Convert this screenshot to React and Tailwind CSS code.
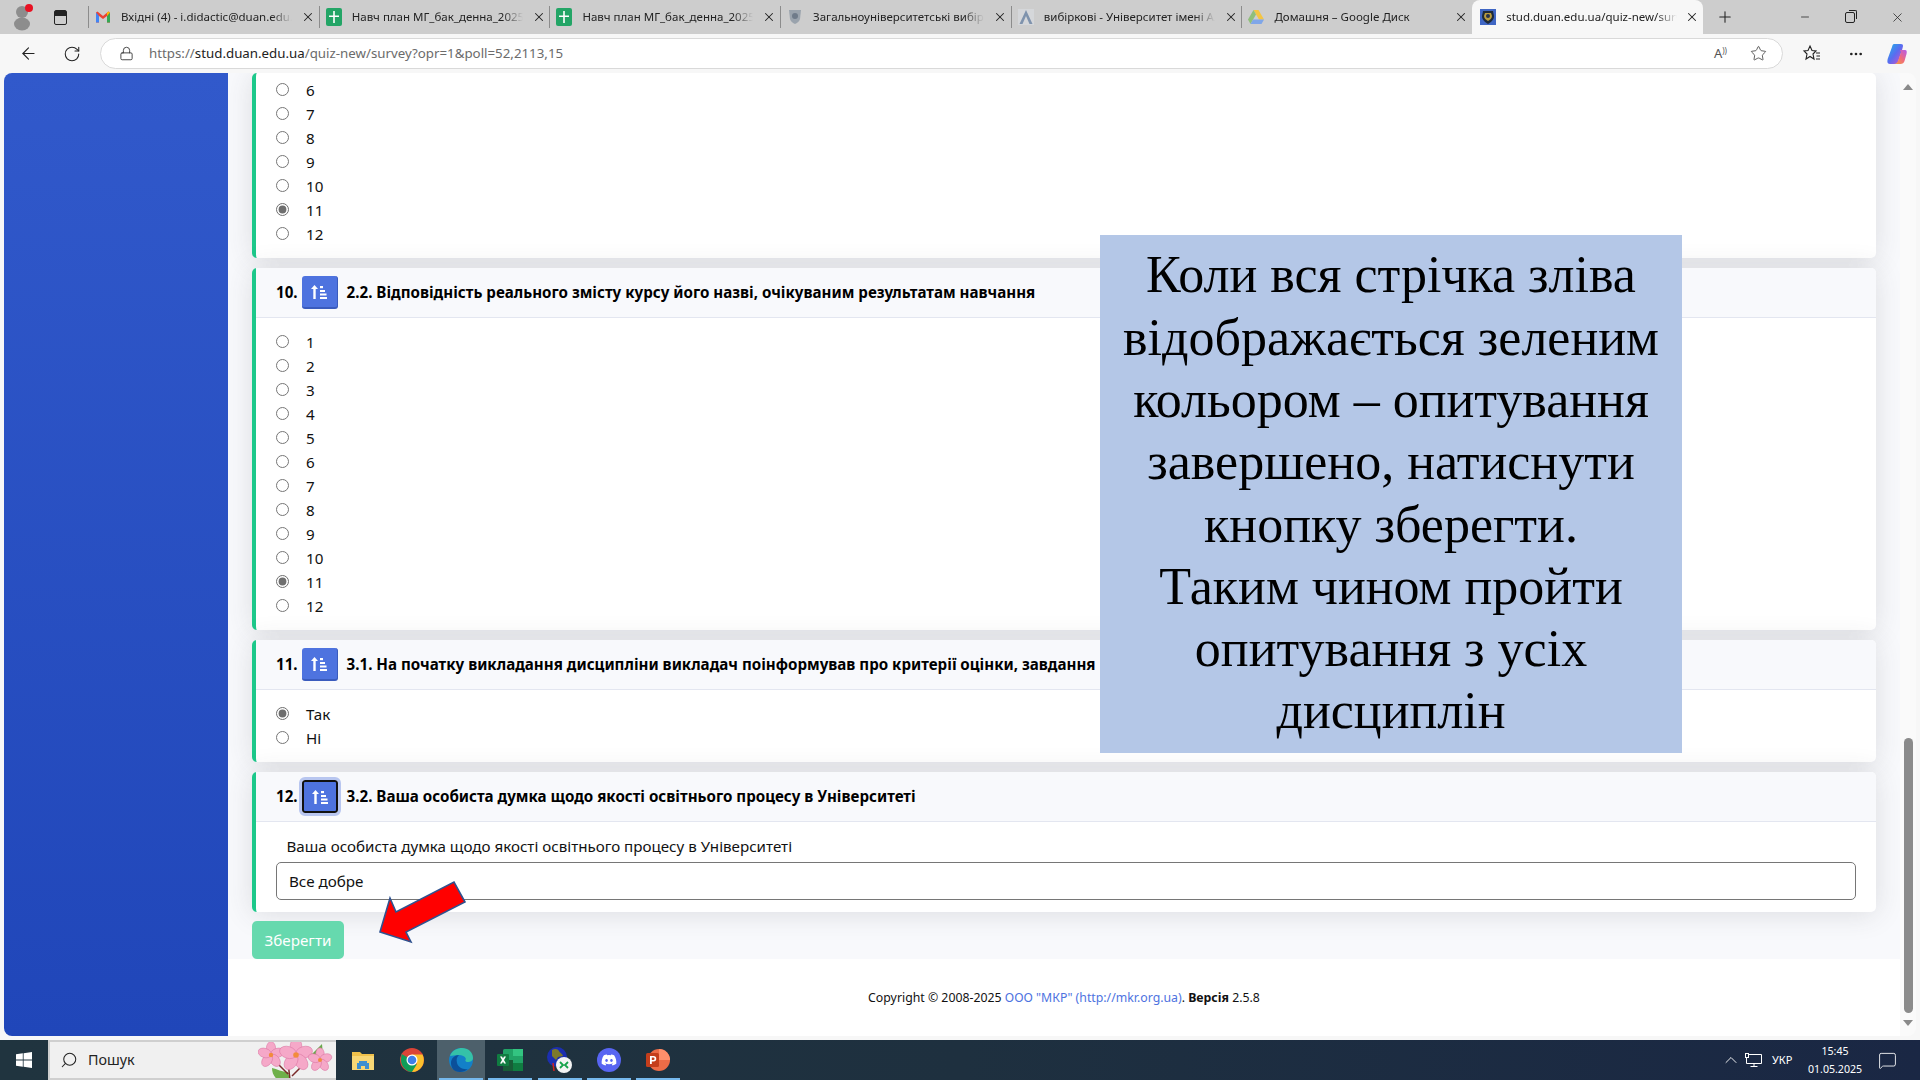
import { ArrowLeft, RotateCw, Lock, Star, Plus, X, Minus, MoreHorizontal, ChevronUp, Search, MessageSquare } from 'lucide-react'
import { FaDiscord } from 'react-icons/fa'

const FONT = "font-['Noto_Sans',sans-serif]"

function GmailIcon() {
  return (
    <svg width="16" height="16" viewBox="0 0 16 16">
      <path d="M1 3.5v10h3V7l4 3 4-3v6.5h3v-10l-1.5-1L8 7 2.5 2.5z" fill="#ea4335" />
      <path d="M1 3.5v10h3V7z" fill="#4285f4" />
      <path d="M15 3.5v10h-3V7z" fill="#34a853" />
      <path d="M12 7l3-3.500-1.500-1L12 3.600z" fill="#fbbc04" />
    </svg>
  )
}

function SheetIcon() {
  return (
    <svg width="16" height="18" viewBox="0 0 16 18">
      <rect x="0" y="0" width="16" height="18" rx="2" fill="#23a566" />
      <path d="M7.200 3h1.600v4.500H13v1.600H8.800V15H7.200V9.100H3V7.500h4.200z" fill="#fff" />
    </svg>
  )
}

function ShieldIcon({ size = 16 }) {
  return (
    <svg width={size} height={size} viewBox="0 0 16 16">
      <rect width="16" height="16" fill="#3f66c4" />
      <path d="M3 2h10l1 5c0 4-3 6-6 8-3-2-6-4-6-8z" fill="#1e2a3a" />
      <path d="M5 4h6l1 3c0 2-2 4-4 5-2-1-4-3-4-5z" fill="#b89b3e" />
      <circle cx="8" cy="7" r="2" fill="#26324a" />
    </svg>
  )
}

function GreyCrest() {
  return (
    <svg width="16" height="18" viewBox="0 0 16 18">
      <path d="M2 2h12l-1 9c-1 3-3 4-5 5-2-1-4-2-5-5z" fill="#9aa3ad" />
      <circle cx="8" cy="8" r="3" fill="#6f7b8a" />
    </svg>
  )
}

function AcademiaIcon() {
  return (
    <svg width="16" height="16" viewBox="0 0 16 16">
      <rect width="16" height="16" fill="#d5d7da" />
      <path d="M8 1l6.500 14h-3L8 7l-3.500 8h-3z" fill="#7f93ad" />
    </svg>
  )
}

function DriveIcon() {
  return (
    <svg width="16" height="15" viewBox="0 0 16 15">
      <path d="M5.500 0h5L16 9.500h-5z" fill="#f4c542" />
      <path d="M5.500 0L0 9.500 2.500 14l5.500-9.500z" fill="#8fbf7a" />
      <path d="M2.500 14h11L16 9.500H5z" fill="#7fa6e8" />
    </svg>
  )
}

function SearchFlowers() {
  const petals = [0, 72, 144, 216, 288]
  const flower = (cx, cy, r, key) => (
    <g key={key}>
      {petals.map((a) => (
        <ellipse
          key={a}
          cx={cx}
          cy={cy - r * 0.6}
          rx={r * 0.42}
          ry={r * 0.62}
          fill="#f5a8c8"
          stroke="#d9709e"
          strokeWidth="0.5"
          transform={`rotate(${a} ${cx} ${cy})`}
        />
      ))}
      <circle cx={cx} cy={cy} r={r * 0.2} fill="#f28c3c" />
    </g>
  )
  return (
    <svg width="78" height="40" viewBox="0 0 78 40">
      <path d="M14 28c5 1 10 4 16 4l2 8H20c-4-3-6-7-6-12z" fill="#6fb04a" />
      <path d="M54 14l10-10 1 12-7 6z" fill="#67a84a" />
      <path d="M14 18l16 16M30 22l2 18M48 22l-14 14" stroke="#7a2a2a" strokeWidth="1.500" fill="none" />
      {flower(13, 15, 11, 'a')}
      {flower(38, 15, 14, 'b')}
      {flower(62, 20, 10, 'c')}
    </svg>
  )
}

function FolderIcon() {
  return (
    <svg width="24" height="22" viewBox="0 0 24 22">
      <path d="M1 3h8l2 2h12v15H1z" fill="#f0c14b" />
      <path d="M1 7h22v14H1z" fill="#f8d775" />
      <path d="M8 12h8v2h2v6h-4v-3h-4v3H6v-6h2z" fill="#3d8fd1" />
    </svg>
  )
}

function ChromeIcon() {
  return (
    <svg width="24" height="24" viewBox="0 0 24 24">
      <circle cx="12" cy="12" r="12" fill="#db4437" />
      <path d="M12 12L1.600 6 1 12c0 6 5 12 11 12l5-7z" fill="#0f9d58" />
      <path d="M12 6.500h10.500A12 12 0 0 1 12 24l5-8z" fill="#fbc02d" />
      <circle cx="12" cy="12" r="5.500" fill="#fff" />
      <circle cx="12" cy="12" r="4.300" fill="#3f7fe8" />
    </svg>
  )
}

function EdgeIcon() {
  return (
    <svg width="24" height="24" viewBox="0 0 24 24">
      <circle cx="12" cy="12" r="12" fill="#1380c8" />
      <path d="M1 8c2-6 8-8 12-8 6 0 11 4 11 10 0 3-3 4-5 4-3 0-3-2-2-3-1-3-4-4-7-4-4 0-7 1-9 1z" fill="#35c1a8" />
      <path d="M2 15c0-5 4-8 8-8-2 2-3 4-2 8 1 4 6 7 11 6-2 2-5 3-8 3-6 0-9-4-9-9z" fill="#0b4f9a" />
    </svg>
  )
}

function ExcelIcon() {
  return (
    <svg width="26" height="22" viewBox="0 0 26 22">
      <rect x="6" y="0" width="20" height="22" rx="1.500" fill="#21a366" />
      <rect x="16" y="0" width="10" height="7" fill="#33c481" />
      <rect x="6" y="11" width="10" height="11" fill="#185c37" />
      <rect x="16" y="14" width="10" height="8" fill="#107c41" />
      <rect x="0" y="5" width="12" height="12" rx="1" fill="#107c41" />
      <path d="M3 7.500h2l1 2 1-2h2l-2 3.500 2 3.500H7l-1-2-1 2H3l2-3.500z" fill="#fff" />
    </svg>
  )
}

function NetworkAppIcon() {
  return (
    <svg width="26" height="26" viewBox="0 0 26 26">
      <circle cx="10" cy="10" r="10" fill="#1c2fb0" />
      <path d="M5 3c3-2 6-1 7 1s3 2 4 5l-5 1-2 3-4-4z" fill="#7d7a2c" />
      <path d="M6 16l1 8" stroke="#d02020" strokeWidth="1.500" />
      <circle cx="17" cy="18" r="8" fill="#f4f4f4" />
      <path d="M13 15l3 3-3 3M21 15l-3 3 3 3" stroke="#16a34a" strokeWidth="1.800" fill="none" />
    </svg>
  )
}

function PowerPointIcon() {
  return (
    <svg width="24" height="24" viewBox="0 0 24 24">
      <circle cx="13" cy="12" r="11" fill="#ed6c47" />
      <path d="M13 1a11 11 0 0 1 11 11H13z" fill="#ff8f6b" />
      <rect x="0" y="5" width="13" height="14" rx="1.500" fill="#c43e1c" />
      <path d="M4 8h3.500a2.500 2.500 0 0 1 0 5.500H5.800V16H4zM5.800 9.500v2.500h1.500a1.200 1.200 0 0 0 0-2.500z" fill="#fff" />
    </svg>
  )
}

function CopilotIcon() {
  return (
    <svg width="24" height="24" viewBox="0 0 24 24">
      <defs>
        <linearGradient id="cp1" x1="0" y1="0" x2="1" y2="1">
          <stop offset="0" stopColor="#19b6e8" />
          <stop offset="0.5" stopColor="#5a6cf0" />
          <stop offset="1" stopColor="#d84fc8" />
        </linearGradient>
        <linearGradient id="cp2" x1="0" y1="1" x2="1" y2="0">
          <stop offset="0" stopColor="#f2a33c" />
          <stop offset="0.5" stopColor="#f06a7c" />
          <stop offset="1" stopColor="#b45bf0" />
        </linearGradient>
      </defs>
      <path d="M9 2h7c3 0 2 3 1 6l-4 12c-1 2-2 2-4 2H5C2 22 2 19 3 16L7 5c.5-2 1-3 2-3z" fill="url(#cp1)" />
      <path d="M15 8h5c2 0 2 2 1.500 4l-2 7c-.5 2-2 3-4 3H9c2 0 3-1 4-3l3-9z" fill="url(#cp2)" />
    </svg>
  )
}

function TaskbarIcon({ center, active, open, children }) {
  return (
    <div className={`relative flex h-10 w-12 items-center justify-center ${center} ${active ? 'bg-[#4d606b]' : ''}`}>
      {children}
      {open && <span className="absolute bottom-0 left-0.5 right-0.5 h-[2px] bg-[#76b9ed]" />}
    </div>
  )
}

const TABS = [
  { icon: <GmailIcon />, title: 'Вхідні (4) - i.didactic@duan.edu.ua' },
  { icon: <SheetIcon />, title: 'Навч план МГ_бак_денна_2025_26.xlsx' },
  { icon: <SheetIcon />, title: 'Навч план МГ_бак_денна_2025_26.xlsx' },
  { icon: <GreyCrest />, title: 'Загальноуніверситетські вибіркові' },
  { icon: <AcademiaIcon />, title: 'вибіркові - Університет імені Альфреда' },
  { icon: <DriveIcon />, title: 'Домашня – Google Диск' },
]

function Tab({ icon, title }) {
  return (
    <div className="flex h-[34px] w-[230.7px] shrink-0 items-center">
      <span className="h-[22px] w-px shrink-0 bg-[#8c8c8c]" />
      <span className="ml-[6px] flex w-[16px] shrink-0 justify-center">{icon}</span>
      <span className="ml-[10px] w-[171px] overflow-hidden whitespace-nowrap text-[11.5px] text-[#222] [mask-image:linear-gradient(to_right,black_88%,transparent)]">
        {title}
      </span>
      <X size={14} strokeWidth={1.8} className="ml-[9px] shrink-0 text-[#222]" />
    </div>
  )
}

function TabBar() {
  return (
    <div className="flex h-[34px] shrink-0 items-center bg-[#cdcdcd]">
      <div className="relative flex h-full w-[88px] shrink-0 items-center">
        <svg width="20" height="28" viewBox="0 0 20 28" className="ml-[12px]">
          <circle cx="10" cy="9" r="6" fill="#8d8d8d" />
          <ellipse cx="10" cy="21" rx="8" ry="6.500" fill="#8d8d8d" />
        </svg>
        <span className="absolute left-[25px] top-[4px] h-[8px] w-[8px] rounded-full bg-[#e81123]" />
        <span className="ml-[22px] flex h-[15px] w-[13px] flex-col rounded-[2px] border border-[#222]">
          <span className="h-[5px] bg-[#222]" />
        </span>
      </div>
      {TABS.map((t, i) => (
        <Tab key={i} icon={t.icon} title={t.title} />
      ))}
      <div className="flex h-[34px] w-[231px] shrink-0 items-center self-end rounded-t-[8px] bg-[#f7f7f7] pl-[8px]">
        <ShieldIcon />
        <span className="ml-[10px] w-[171px] overflow-hidden whitespace-nowrap text-[11.5px] text-[#222] [mask-image:linear-gradient(to_right,black_88%,transparent)]">
          stud.duan.edu.ua/quiz-new/survey?opr=1
        </span>
        <X size={14} strokeWidth={1.8} className="ml-[8px] shrink-0 text-[#222]" />
      </div>
      <Plus size={18} strokeWidth={1.4} className="ml-[13px] text-[#222]" />
      <div className="ml-auto flex h-full items-center">
        <span className="flex w-[46px] justify-center">
          <Minus size={12} strokeWidth={1.5} className="text-[#222]" />
        </span>
        <span className="flex w-[46px] justify-center pr-[2px]">
          <span className="relative h-[11px] w-[10px] rounded-[2px] border border-[#222]">
            <span className="absolute -right-[3px] -top-[3px] h-[9px] w-[8px] rounded-tr-[2px] border-r border-t border-[#222]" />
          </span>
        </span>
        <span className="flex w-[46px] justify-center">
          <X size={15} strokeWidth={1.2} className="text-[#222]" />
        </span>
      </div>
    </div>
  )
}

function Toolbar() {
  return (
    <div className="flex h-[39px] shrink-0 items-center bg-[#f7f7f7] pl-[6px]">
      <span className="flex w-[44px] justify-center">
        <ArrowLeft size={19} strokeWidth={1.4} className="text-[#222]" />
      </span>
      <span className="flex w-[44px] justify-center">
        <RotateCw size={18} strokeWidth={1.4} className="text-[#222]" />
      </span>
      <div className="ml-[6px] flex h-[31px] flex-1 items-center rounded-full border border-[#d9d9d9] bg-white pl-[18px] pr-[15px]">
        <Lock size={15} strokeWidth={1.4} className="text-[#333]" />
        <span className="ml-[15px] whitespace-nowrap text-[13.3px] text-[#6b6b6b]">
          https://<span className="text-[#222]">stud.duan.edu.ua</span>/quiz-new/survey?opr=1&amp;poll=52,2113,15
        </span>
        <span className="ml-auto text-[13px] leading-none text-[#555]">
          A<sup className="text-[8px]">))</sup>
        </span>
        <Star size={17} strokeWidth={1.1} className="ml-[23px] text-[#333]" />
      </div>
      <span className="ml-[7px] flex w-[44px] justify-center">
        <svg width="20" height="20" viewBox="0 0 20 20" fill="none" stroke="#222" strokeWidth="1.100">
          <path d="M8 2l2 4.500 4 .5-3 3 1 5-4-2.500L4 15l1-5-3-3 4-.5z" />
          <path d="M14 9h4M14.500 12h3.500M14 15h4" />
        </svg>
      </span>
      <span className="flex w-[44px] justify-center">
        <MoreHorizontal size={16} className="text-[#222]" />
      </span>
      <span className="flex w-[38px] justify-center">
        <CopilotIcon />
      </span>
      <span className="w-[4px]" />
    </div>
  )
}

function Option({ name, label, checked }) {
  return (
    <label className="flex h-6 items-center text-[15.2px] text-[#111]">
      <input type="radio" name={name} defaultChecked={checked} className="m-0 h-[13px] w-[13px] accent-[#6e6e6e]" />
      <span className="ml-[17px] pt-[2px]">{label}</span>
    </label>
  )
}

function Card({ num, title, focused, children }) {
  return (
    <div className="rounded-[5px] border-l-4 border-[#1cc88a] bg-white shadow-[0_2px_28px_rgba(58,59,69,0.15)]">
      {title && (
        <div className="flex h-[50px] items-center gap-[4px] rounded-tr-[5px] border-b border-[#e3e6f0] bg-[#f8f9fc] pl-[20px] text-[15.15px] font-bold text-black">
          <span>{num}.</span>
          <span
            className={`flex h-[33px] w-[36px] items-center justify-center rounded-[3px] bg-[#4e73df] ${
              focused ? 'border-2 border-[#111] outline-3 outline-[#b8c6f0]' : 'border-b-2 border-r border-[#3a5bbd]'
            }`}
          >
            <svg width="16" height="14" viewBox="0 0 16 14" fill="#fff">
              <path d="M3.500 0L7 4H4.700v10H2.300V4H0z" />
              <rect x="9" y="1" width="3" height="2.200" />
              <rect x="9" y="5" width="5" height="2" />
              <rect x="9" y="8.500" width="6.500" height="2" />
              <rect x="9" y="12" width="7" height="2" />
            </svg>
          </span>
          <span className="ml-[5px]">{title}</span>
        </div>
      )}
      {children}
    </div>
  )
}

const SCALE = ['1', '2', '3', '4', '5', '6', '7', '8', '9', '10', '11', '12']

function Survey() {
  return (
    <div className="bg-[#f8f9fc] px-[24px]">
      <div className="flex flex-col gap-[10px]">
        <Card>
          <div className="pb-[13px] pl-[20px] pt-[4px]">
            {SCALE.slice(5).map((v) => (
              <Option key={v} name="q9" label={v} checked={v === '11'} />
            ))}
          </div>
        </Card>
        <Card num="10" title="2.2. Відповідність реального змісту курсу його назві, очікуваним результатам навчання">
          <div className="pb-[13px] pl-[20px] pt-[11px]">
            {SCALE.map((v) => (
              <Option key={v} name="q10" label={v} checked={v === '11'} />
            ))}
          </div>
        </Card>
        <Card num="11" title="3.1. На початку викладання дисципліни викладач поінформував про критерії оцінки, завдання">
          <div className="pb-[13px] pl-[20px] pt-[11px]">
            <Option name="q11" label="Так" checked />
            <Option name="q11" label="Ні" />
          </div>
        </Card>
        <Card num="12" focused title="3.2. Ваша особиста думка щодо якості освітнього процесу в Університеті">
          <div className="px-[20px] pb-[12px]">
            <div className="flex h-[40px] items-end pb-[4px] pl-[10.5px] text-[15.15px] text-[#111]">
              Ваша особиста думка щодо якості освітнього процесу в Університеті
            </div>
            <div className="flex h-[38px] items-center rounded-[5px] border border-[#767676] bg-white pl-[12px] pt-px text-[15.2px] text-[#111]">
              Все добре
            </div>
          </div>
        </Card>
      </div>
      <button className="mt-[9px] h-[38px] w-[92px] rounded-[5px] bg-[#66d9ae] text-[15.2px] text-white">Зберегти</button>
    </div>
  )
}

function Footer() {
  return (
    <div className="flex flex-1 items-center justify-center bg-white pt-px text-[12.3px] text-[#111]">
      <span>
        Copyright © 2008-2025 <span className="text-[#4e73df]">ООО "МКР" (http://mkr.org.ua)</span>.{' '}
        <b>Версія</b> 2.5.8
      </span>
    </div>
  )
}

function Scrollbar() {
  return (
    <div className="flex w-[16px] shrink-0 flex-col items-center rounded-r-[8px] bg-[#fafafa] pb-[10px] pt-[11px]">
      <span className="h-0 w-0 border-x-[5px] border-b-[6px] border-x-transparent border-b-[#8a8a8a]" />
      <div className="flex-1" />
      <span className="h-[275px] w-[9px] rounded-full bg-[#8b8b8b]" />
      <span className="mt-[7px] h-0 w-0 border-x-[5px] border-t-[6px] border-x-transparent border-t-[#8a8a8a]" />
    </div>
  )
}

function Taskbar() {
  return (
    <div className="flex h-[40px] shrink-0 items-center bg-gradient-to-r from-[#20343f] via-[#1e303f] to-[#1a2744] text-white">
      <div className="flex w-[48px] justify-center">
        <svg width="16" height="16" viewBox="0 0 16 16" fill="#fff">
          <path d="M0 2.300l6.800-1v6.200H0zM7.600 1.200L16 0v7.500H7.600zM0 8.400h6.800v6.300l-6.800-1zM7.600 8.400H16V16l-8.400-1.200z" />
        </svg>
      </div>
      <div className="flex h-[40px] w-[288px] items-center overflow-hidden border-y-2 border-l-2 border-[#cfcfcf] bg-[#f0f0f0] pl-[10px] text-[#222]">
        <Search size={18} strokeWidth={1.4} className="-scale-x-100" />
        <span className="ml-[10px] text-[14.3px]">Пошук</span>
        <span className="ml-auto">
          <SearchFlowers />
        </span>
      </div>
      <TaskbarIcon center="ml-[3px]">
        <FolderIcon />
      </TaskbarIcon>
      <TaskbarIcon center="ml-px">
        <ChromeIcon />
      </TaskbarIcon>
      <TaskbarIcon center="ml-px" active open>
        <EdgeIcon />
      </TaskbarIcon>
      <TaskbarIcon center="ml-px" open>
        <ExcelIcon />
      </TaskbarIcon>
      <TaskbarIcon center="ml-[2px]" open>
        <NetworkAppIcon />
      </TaskbarIcon>
      <TaskbarIcon center="ml-px" open>
        <span className="flex h-[24px] w-[24px] items-center justify-center rounded-full bg-[#5865f2]">
          <FaDiscord size={16} className="text-white" />
        </span>
      </TaskbarIcon>
      <TaskbarIcon center="ml-px" open>
        <PowerPointIcon />
      </TaskbarIcon>
      <div className="ml-auto flex items-center">
        <ChevronUp size={20} strokeWidth={1.1} />
        <svg width="17" height="15" viewBox="0 0 17 15" fill="none" stroke="#fff" className="ml-[4px]">
          <path d="M4 1.500h12.500v9H1.500V5M9 10.500v3M5.500 13.500h7" />
          <rect x="0.500" y="0.500" width="3" height="4" />
        </svg>
        <span className="ml-[10px] w-[24px] text-[11px]">УКР</span>
        <div className="ml-[11px] flex w-[56px] flex-col items-center text-[10.6px] leading-[18px]">
          <span>15:45</span>
          <span>01.05.2025</span>
        </div>
        <MessageSquare size={19} strokeWidth={1.1} className="ml-[15px] mr-[23px]" />
      </div>
    </div>
  )
}

// the slide annotation pasted over the screenshot
function Annotation() {
  return (
    <div className="absolute left-[1100px] top-[235px] flex h-[518px] w-[582px] items-center justify-center bg-[#b4c7e7] pb-[1px] text-center font-['Liberation_Serif',serif] text-[52px] leading-[62.3px] text-black">
      <p>
        Коли вся стрічка зліва
        <br />
        відображається зеленим
        <br />
        кольором – опитування
        <br />
        завершено, натиснути
        <br />
        кнопку зберегти.
        <br />
        Таким чином пройти
        <br />
        опитування з усіх
        <br />
        дисциплін
      </p>
    </div>
  )
}

function Arrow() {
  return (
    <svg width="110" height="70" viewBox="0 0 110 70" className="absolute left-[372px] top-[878px]">
      <path d="M8 54L18 20l6 14L82 4l11 20-59 30 5 10z" fill="#ff0000" stroke="#2f528f" strokeWidth="1.600" />
    </svg>
  )
}

export default function App() {
  return (
    <div className={`relative flex h-screen flex-col overflow-hidden bg-[#f7f7f7] ${FONT}`}>
      <TabBar />
      <Toolbar />
      <div className="flex min-h-0 flex-1 px-[4px] pb-[4px]">
        <aside className="w-[224px] shrink-0 rounded-l-[8px] bg-gradient-to-b from-[#3159cb] to-[#2046b9]" />
        <main className="flex min-w-0 flex-1 flex-col overflow-hidden bg-white">
          <Survey />
          <Footer />
        </main>
        <Scrollbar />
      </div>
      <Taskbar />
      <Annotation />
      <Arrow />
    </div>
  )
}
